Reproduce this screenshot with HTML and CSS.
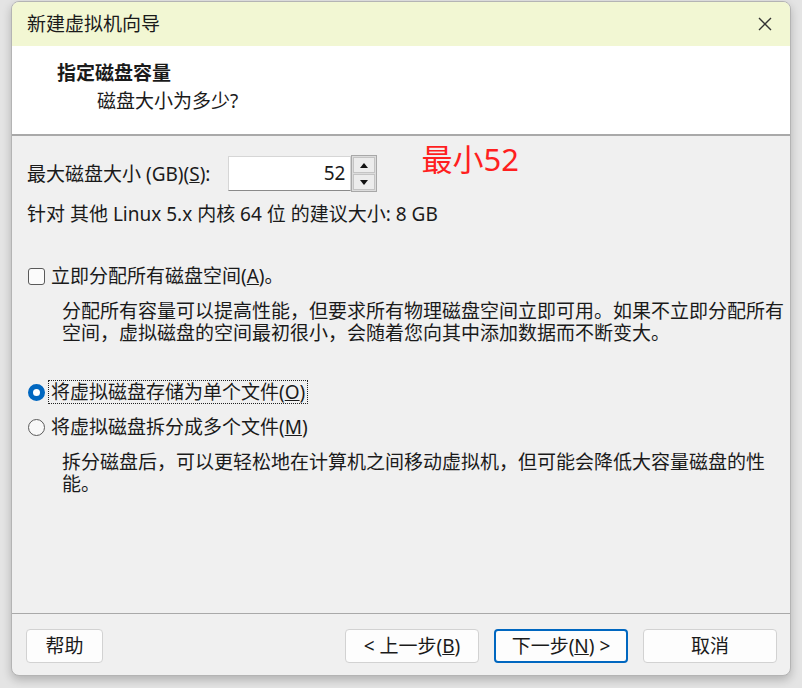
FILE: index.html
```html
<!DOCTYPE html>
<html lang="zh-CN">
<head>
  <meta charset="UTF-8" />
  <title>新建虚拟机向导</title>
  <link rel="stylesheet" href="styles.css">
</head>
<body>

  <div class="window">
    <div class="titlebar">
      <span class="title">新建虚拟机向导</span>
      <svg class="close" width="14" height="14" viewBox="0 0 14 14">
        <path d="M1 1 L13 13 M13 1 L1 13" stroke="#333" stroke-width="1.4" fill="none"/>
      </svg>
    </div>

    <div class="header">
      <div class="head-title">指定磁盘容量</div>
      <div class="head-sub">磁盘大小为多少?</div>
    </div>

    <div class="content">
      <div class="size-row">
        <label class="size-label">最大磁盘大小 (GB)(<u>S</u>):</label>
        <div class="spin-input">52</div>
        <div class="spin">
          <div class="spin-btn"><span class="arrow up"></span></div>
          <div class="spin-btn"><span class="arrow down"></span></div>
        </div>
        <div class="note">最小52</div>
      </div>

      <p class="hint">针对 其他 Linux 5.x 内核 64 位 的建议大小: 8 GB</p>

      <div class="option check-row">
        <span class="checkbox"></span>
        <span>立即分配所有磁盘空间(<u>A</u>)。</span>
      </div>
      <p class="desc">分配所有容量可以提高性能，但要求所有物理磁盘空间立即可用。如果不立即分配所有<br>空间，虚拟磁盘的空间最初很小，会随着您向其中添加数据而不断变大。</p>

      <div class="option radio-row first">
        <span class="radio checked"></span>
        <span class="focused">将虚拟磁盘存储为单个文件(<u>O</u>)</span>
      </div>
      <div class="option radio-row">
        <span class="radio"></span>
        <span>将虚拟磁盘拆分成多个文件(<u>M</u>)</span>
      </div>
      <p class="desc">拆分磁盘后，可以更轻松地在计算机之间移动虚拟机，但可能会降低大容量磁盘的性<br>能。</p>
    </div>

    <div class="footer">
      <button class="btn help">帮助</button>
      <div class="spacer"></div>
      <button class="btn">&lt; 上一步(<u>B</u>)</button>
      <button class="btn primary">下一步(<u>N</u>) &gt;</button>
      <button class="btn">取消</button>
    </div>
  </div>

</body>
</html>
```

FILE: styles.css
```css
body {
  margin: 0;
  background: #e4e4e4;
  font-family: "Noto Sans", "Noto Sans CJK SC", sans-serif;
  font-size: 19px;
  color: #1a1a1a;
  height: 688px;
  overflow: hidden;
}
.window {
  margin: 1px 0 0 11px;
  width: 778px;
  height: 673px;
  border: 1px solid #b4b4b4;
  border-radius: 8px;
  overflow: hidden;
  display: flex;
  flex-direction: column;
  background: #f0f0f0;
  box-shadow: 0 4px 10px rgba(0, 0, 0, 0.22);
}
.titlebar {
  height: 44px;
  flex: none;
  background: #f2f7d3;
  display: flex;
  align-items: center;
  justify-content: space-between;
  padding: 0 18px 0 15px;
}
.title {
  line-height: 22px;
}
.header {
  flex: none;
  background: #fff;
  border-bottom: 2px solid #a9a9a9;
  padding: 14px 0 0 45px;
  box-sizing: border-box;
  height: 90px;
}
.head-title {
  font-weight: bold;
  line-height: 26px;
}
.head-sub {
  line-height: 26px;
  margin-top: 2px;
  padding-left: 40px;
}
.content {
  flex: 1;
  padding-left: 15px;
}
.size-row {
  display: flex;
  align-items: center;
  margin-top: 19px;
  height: 37px;
}
.size-label {
  line-height: 22px;
}
.spin-input {
  margin-left: 18px;
  width: 123px;
  height: 35px;
  box-sizing: border-box;
  background: #fff;
  border: 1px solid #d6d6d6;
  border-bottom-color: #8a8a8a;
  text-align: right;
  padding-right: 5px;
  line-height: 33px;
}
.spin {
  width: 26px;
  height: 37px;
  box-sizing: border-box;
  border: 1px solid #a8a8a8;
  background: #dcdcdc;
  display: flex;
  flex-direction: column;
  gap: 1px;
  padding: 1px;
}
.spin-btn {
  flex: 1;
  background: #ececec;
  border: 1px solid #c4c4c4;
  display: flex;
  align-items: center;
  justify-content: center;
}
.arrow {
  width: 0;
  height: 0;
  border-left: 4px solid transparent;
  border-right: 4px solid transparent;
}
.arrow.up {
  border-bottom: 5px solid #111;
}
.arrow.down {
  border-top: 5px solid #111;
}
.note {
  align-self: flex-start;
  margin: -13px 0 0 44px;
  color: #ff1f1f;
  font-size: 31px;
  line-height: 34px;
}
.hint {
  margin: 11px 0 0;
  line-height: 22px;
}
.option {
  display: flex;
  align-items: center;
  line-height: 22px;
}
.check-row {
  margin-top: 40px;
}
.checkbox {
  width: 17px;
  height: 17px;
  box-sizing: border-box;
  border: 1px solid #5a5a5a;
  border-radius: 3px;
  background: #fbfbfb;
  margin: 0 6px 0 1px;
}
.desc {
  margin: 13px 0 0 35px;
  line-height: 22px;
  white-space: nowrap;
}
.radio-row {
  margin-top: 13px;
}
.radio-row.first {
  margin-top: 37px;
}
.radio {
  width: 17px;
  height: 17px;
  box-sizing: border-box;
  border: 1px solid #5a5a5a;
  border-radius: 50%;
  background: #f8f8f8;
  margin: 0 6px 0 1px;
}
.radio.checked {
  border: 5px solid #0067c0;
  background: #fff;
}
.focused {
  outline: 1px dotted #222;
  margin-left: -2px;
  padding: 0 2px;
}
.footer {
  height: 62px;
  box-sizing: border-box;
  flex: none;
  border-top: 1px solid #a9a9a9;
  display: flex;
  align-items: flex-start;
  gap: 15px;
  padding: 15px 13px 0 14px;
}
.spacer {
  flex: 1;
}
.btn {
  width: 134px;
  height: 34px;
  background: #fdfdfd;
  border: 1px solid #d2d2d2;
  border-radius: 4px;
  font-family: inherit;
  font-size: 19px;
  color: #1a1a1a;
  line-height: 22px;
  padding: 0;
}
.btn.help {
  width: 77px;
}
.btn.primary {
  border: 2px solid #0067c0;
}
```
